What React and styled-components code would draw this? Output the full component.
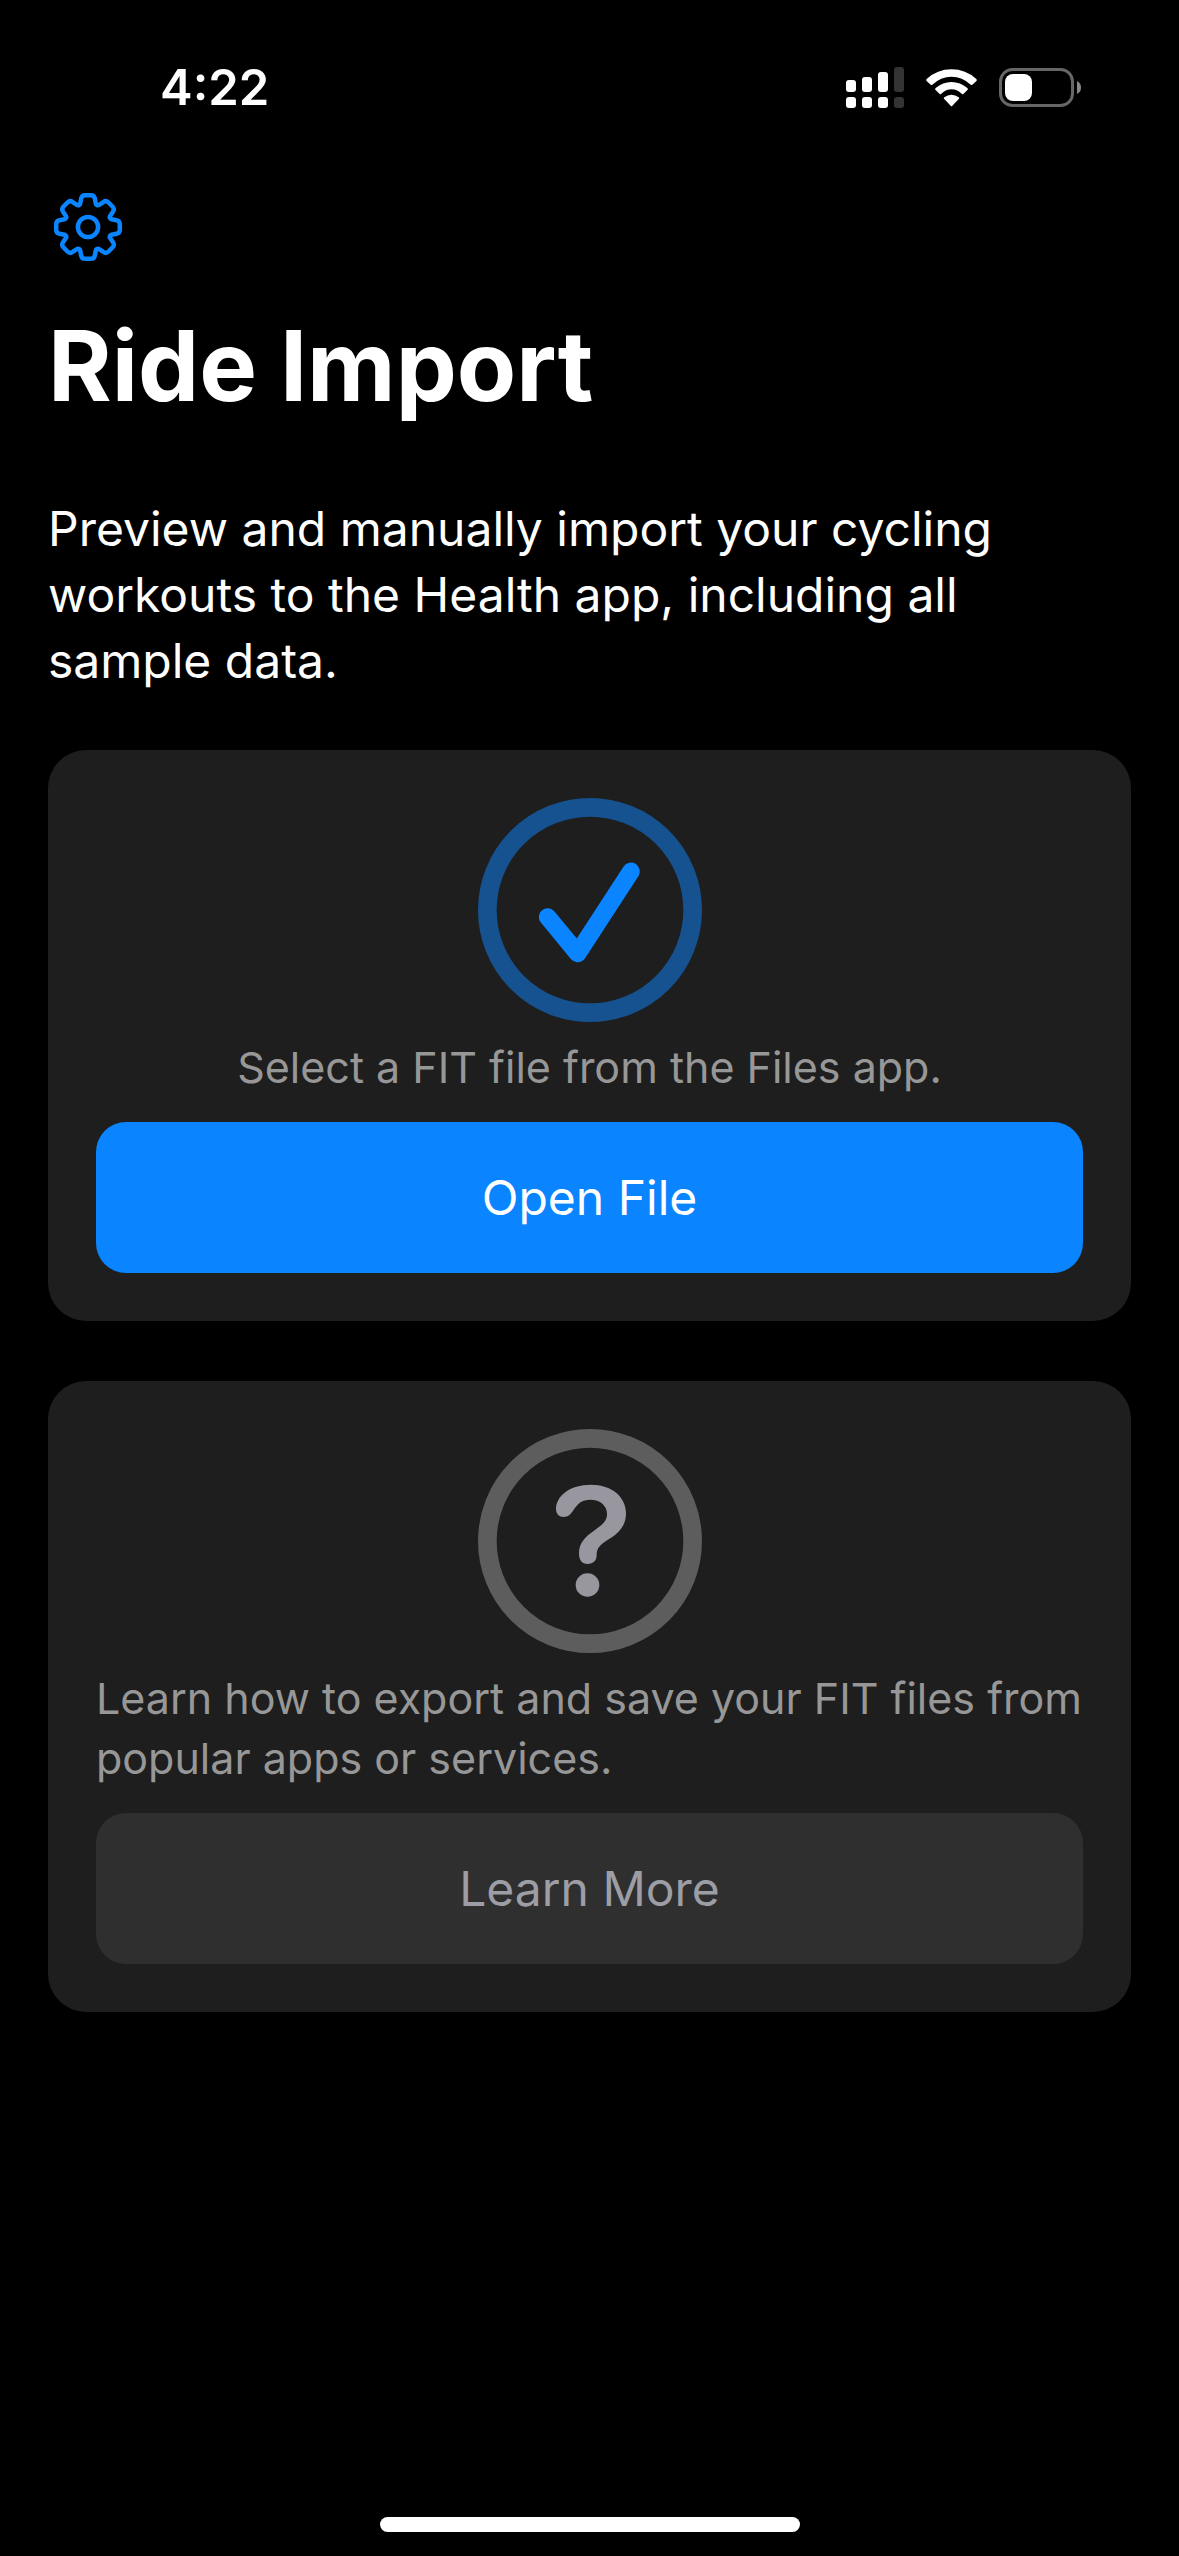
import React from "react";
import styled, { createGlobalStyle } from "styled-components";

const GlobalStyle = createGlobalStyle`
  *, *::before, *::after { box-sizing: border-box; }
  body {
    margin: 0;
    background: #000;
    color: #fff;
    font-family: Inter, "Liberation Sans", sans-serif;
  }
`;

const Screen = styled.div`
  min-height: 100vh;
  display: flex;
  flex-direction: column;
`;

const StatusBar = styled.header`
  display: flex;
  align-items: center;
  justify-content: space-between;
  height: 176px;
  padding: 0 97px 0 160px;
`;

const Clock = styled.time`
  font-size: 49px;
  line-height: 60px;
  font-weight: 600;
`;

const StatusIcons = styled.div`
  display: flex;
  align-items: center;
  gap: 22px;
`;

const Glyph = styled.svg`
  display: block;
  flex: none;
`;

const Content = styled.main`
  flex: 1;
  padding: 0 48px;
`;

const Toolbar = styled.nav`
  display: flex;
  padding: 15px 4px 0;
`;

const IconButton = styled.button`
  padding: 0;
  border: 0;
  background: none;
  color: #0a84ff;
  cursor: pointer;
`;

const Title = styled.h1`
  margin: 43px 0 70px;
  font-size: 97px;
  line-height: 120px;
  font-weight: 700;
`;

const Intro = styled.p`
  margin: 0 0 56px;
  font-size: 48px;
  line-height: 66px;
`;

const Cards = styled.div`
  display: grid;
  gap: 60px;
`;

const Card = styled.section`
  display: flex;
  flex-direction: column;
  align-items: center;
  padding: 48px;
  border-radius: 38px;
  background: #1e1e1e;
`;

const CardText = styled.p`
  margin: 15px 0 25px;
  font-size: 43px;
  line-height: 60px;
  color: #979797;
`;

const ActionButton = styled.button`
  width: 100%;
  height: 151px;
  border: 0;
  border-radius: 30px;
  font: inherit;
  font-size: 48px;
  line-height: 60px;
  cursor: pointer;
  color: ${(p) => (p.$primary ? "#fff" : "#9d9da5")};
  background: ${(p) => (p.$primary ? "#0a84ff" : "#2f2f2f")};
`;

const HomeArea = styled.footer`
  display: flex;
  justify-content: center;
  padding: 24px 0;
`;

const HomeIndicator = styled.div`
  width: 420px;
  height: 15px;
  border-radius: 8px;
  background: #fff;
`;

// Builds the outline of an eight-toothed cog with softened corners.
function cogPath() {
  const tooth = [[-8, -22.3], [-6.2, -31.8], [6.2, -31.8], [8, -22.3]];
  const pts = [];
  for (let k = 0; k < 8; k++) {
    const a = (k * Math.PI) / 4;
    tooth.forEach(([x, y], i) => {
      pts.push({
        x: x * Math.cos(a) - y * Math.sin(a),
        y: x * Math.sin(a) + y * Math.cos(a),
        r: i === 1 || i === 2 ? 3.4 : 1.2,
      });
    });
  }
  const toward = (p, q) => {
    const d = Math.hypot(q.x - p.x, q.y - p.y);
    const t = p.r / d;
    return `${(p.x + (q.x - p.x) * t).toFixed(2)} ${(p.y + (q.y - p.y) * t).toFixed(2)}`;
  };
  return (
    pts
      .map((p, i) => {
        const prev = pts[(i + pts.length - 1) % pts.length];
        const next = pts[(i + 1) % pts.length];
        return `${i ? "L" : "M"}${toward(p, prev)}Q${p.x.toFixed(2)} ${p.y.toFixed(2)} ${toward(p, next)}`;
      })
      .join("") + "Z"
  );
}

const COG = cogPath();

const GearIcon = () => (
  <Glyph width="72" height="72" viewBox="-36 -36 72 72" fill="none" stroke="currentColor" strokeWidth="4.5" aria-hidden="true">
    <path d={COG} />
    <circle r="10.1" />
  </Glyph>
);

const SignalIcon = () => (
  <Glyph width="58" height="42" viewBox="0 0 58 42" fill="#fff" aria-hidden="true">
    <rect x="0" y="13" width="10" height="12" rx="3" />
    <rect x="16" y="10" width="10" height="15" rx="3" />
    <rect x="32" y="5" width="10" height="20" rx="3" />
    <rect x="48" y="0" width="10" height="25" rx="3" fill="#333" />
    <rect x="0" y="30" width="10" height="11" rx="3" />
    <rect x="16" y="30" width="10" height="11" rx="3" />
    <rect x="32" y="30" width="10" height="11" rx="3" />
    <rect x="48" y="30" width="10" height="11" rx="3" fill="#333" />
  </Glyph>
);

const WifiIcon = () => (
  <Glyph width="51" height="38" viewBox="318 56 153 114" fill="#fff" aria-hidden="true">
    <path d="M319 91Q318 88 320 86Q352 57 394.500 57Q437 57 469 86Q471 88 470 91L457 103Q455 105 452 103Q427 79 394.500 79Q362 79 337 103Q334 105 332 103Z" />
    <path d="M346 118Q344 116 347 113Q368 95 394.500 95Q421 95 442 113Q445 116 443 118L430 131Q428 133 425 130Q411 117 394.500 117Q378 117 364 130Q361 133 359 131Z" />
    <path d="M372 145Q370 143 373 141Q383 133 394.500 133Q406 133 416 141Q419 143 417 145L397 166Q394.500 169 392 166Z" />
  </Glyph>
);

const BatteryIcon = () => (
  <Glyph width="83" height="40" viewBox="0 0 83 40" aria-hidden="true">
    <rect x="1.500" y="1.500" width="72" height="36" rx="12" fill="none" stroke="#666" strokeWidth="3" />
    <path d="M78 13Q82 15 82 19.500Q82 24 78 26Z" fill="#888" />
    <rect x="6" y="6" width="27" height="27" rx="8" fill="#fff" />
  </Glyph>
);

const CheckBadge = () => (
  <Glyph width="224" height="224" viewBox="51 54 672 672" fill="none" aria-hidden="true">
    <circle cx="387" cy="390" r="308" stroke="#15528f" strokeWidth="56" />
    <path d="M260 411L350 520L510 274" stroke="#0a84ff" strokeWidth="53" strokeLinecap="round" strokeLinejoin="round" />
  </Glyph>
);

const HelpBadge = () => (
  <Glyph width="224" height="224" viewBox="51 57 672 672" fill="none" aria-hidden="true">
    <circle cx="387" cy="393" r="308" stroke="#5d5d5e" strokeWidth="56" />
    <path
      fill="#98979f"
      d="M285 297C285 259 325 224 390 224C452 224 495 260 495 310C495 345 477 366 448 385C420 403 407 411 407 436C407 452 397 462 380 462C363 462 354 451 354 430C354 400 370 382 402 360C427 342 438 332 438 312C438 287 418 269 388 269C363 269 350 281 337 301C329 314 321 321 308 321C294 321 285 311 285 297Z"
    />
    <circle cx="379.500" cy="525" r="35.500" fill="#98979f" />
  </Glyph>
);

export default function App() {
  return (
    <>
      <GlobalStyle />
      <Screen>
        <StatusBar>
          <Clock>4:22</Clock>
          <StatusIcons>
            <SignalIcon />
            <WifiIcon />
            <BatteryIcon />
          </StatusIcons>
        </StatusBar>
        <Content>
          <Toolbar>
            <IconButton type="button" aria-label="Settings">
              <GearIcon />
            </IconButton>
          </Toolbar>
          <Title>Ride Import</Title>
          <Intro>
            Preview and manually import your cycling workouts to the Health app, including all sample data.
          </Intro>
          <Cards>
            <Card>
              <CheckBadge />
              <CardText>Select a FIT file from the Files app.</CardText>
              <ActionButton type="button" $primary>Open File</ActionButton>
            </Card>
            <Card>
              <HelpBadge />
              <CardText>Learn how to export and save your FIT files from popular apps or services.</CardText>
              <ActionButton type="button">Learn More</ActionButton>
            </Card>
          </Cards>
        </Content>
        <HomeArea>
          <HomeIndicator />
        </HomeArea>
      </Screen>
    </>
  );
}
